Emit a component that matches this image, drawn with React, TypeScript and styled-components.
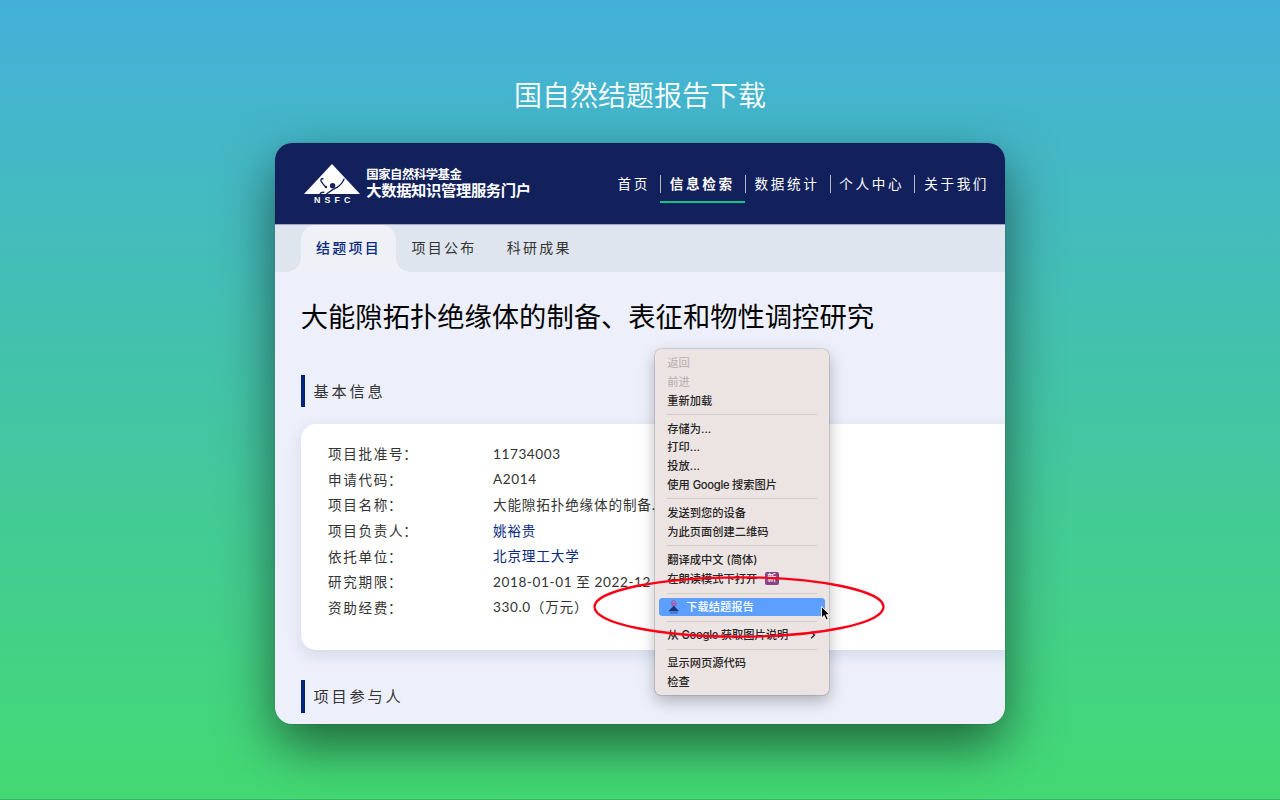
import React from 'react';
import styled, { createGlobalStyle } from 'styled-components';

const Global = createGlobalStyle`
  * { box-sizing: border-box; }
  html, body { margin: 0; padding: 0; }
  body { font-family: 'Noto Sans CJK SC', sans-serif; overflow: hidden; }
`;

const Stage = styled.div`
  width: 1280px;
  height: 800px;
  background: linear-gradient(180deg, #44b0da 0%, #43d972 100%);
  border-bottom: 1px solid #3cb36b;
  display: flex;
  flex-direction: column;
  align-items: center;
  overflow: hidden;
`;

const Title = styled.h1`
  margin: 74px 0 0;
  height: 69px;
  line-height: 40px;
  font-size: 28px;
  font-weight: 350;
  color: #fff;
`;

const Frame = styled.div`
  position: relative;
  flex: none;
  width: 730.5px;
  height: 580.5px;
  border-radius: 17px;
  box-shadow: 0 0 1px rgba(0, 0, 0, 0.45), 0 22px 54px rgba(0, 0, 0, 0.53);
`;

const Page = styled.div`
  width: 100%;
  height: 100%;
  border-radius: 17px;
  overflow: hidden;
  background: #edf0fa;
  display: flex;
  flex-direction: column;
`;

const Header = styled.header`
  height: 81.5px;
  flex: none;
  background: #12205b;
  border-bottom: 1px solid #a3a6c4;
  display: flex;
  justify-content: space-between;
  padding: 20px 6px 0 29px;
`;

const Brand = styled.div`
  display: flex;
  gap: 6.5px;
  color: #fff;
`;

const Emblem = styled.div`
  width: 56px;
  padding-top: 0.6px;
  display: flex;
  flex-direction: column;
  align-items: center;
  svg { display: block; }
`;

const EmblemName = styled.span`
  font: 700 8.8px/9px 'Liberation Sans', sans-serif;
  letter-spacing: 4.2px;
  margin: 2px -5px 0 0;
`;

const BrandText = styled.div`
  padding-top: 3px;
  white-space: nowrap;
`;

const BrandLine = styled.div<{ $big?: boolean }>`
  font-weight: 700;
  font-size: ${p => (p.$big ? 15.3 : 12.4)}px;
  letter-spacing: ${p => (p.$big ? -0.35 : -0.5)}px;
  line-height: ${p => (p.$big ? 15 : 16)}px;
`;

const Nav = styled.nav`
  display: flex;
  align-items: flex-start;
  padding-top: 1px;
`;

const NavItem = styled.a<{ $active?: boolean; $first?: boolean }>`
  width: ${p => (p.$first ? 52.3 : 84.8)}px;
  height: 39px;
  padding: 9px 0 0 9.7px;
  font-size: 13.6px;
  line-height: 20px;
  letter-spacing: 2.65px;
  white-space: nowrap;
  color: #fff;
  font-weight: ${p => (p.$active ? 700 : 400)};
  border-bottom: 2px solid ${p => (p.$active ? '#12c583' : 'transparent')};
  background: ${p =>
    p.$first ? 'none' : 'linear-gradient(#b4b8cc, #b4b8cc) 0 11px / 1px 18px no-repeat'};
`;

const Tabs = styled.div`
  height: 47px;
  flex: none;
  display: flex;
  background: #dfe5ef;
  padding-left: 26px;
`;

const Tab = styled.div<{ $active?: boolean }>`
  position: relative;
  width: 95.4px;
  padding: 11px 0 0 15.3px;
  font-size: 14px;
  line-height: 22px;
  letter-spacing: 2.25px;
  font-weight: ${p => (p.$active ? 500 : 400)};
  color: ${p => (p.$active ? '#0b2a80' : '#333')};
  background: ${p => (p.$active ? '#eff1f7' : 'none')};
  border-radius: 15px 15px 0 0;
  ${p =>
    p.$active &&
    `
    &::before, &::after {
      content: '';
      position: absolute;
      bottom: 0;
      width: 14px;
      height: 14px;
    }
    &::before { left: -14px; background: radial-gradient(circle at 0 0, transparent 13.5px, #eff1f7 14px); }
    &::after { right: -14px; background: radial-gradient(circle at 100% 0, transparent 13.5px, #eff1f7 14px); }
  `}
`;

const Content = styled.main`
  padding: 23px 0 0 26px;
`;

const Heading = styled.h2`
  margin: 0 0 40px;
  font-size: 27.3px;
  line-height: 40px;
  font-weight: 400;
  color: #000;
  white-space: nowrap;
`;

const Section = styled.h3`
  margin: 0;
  height: 32.5px;
  border-left: 4px solid #04247b;
  padding-left: 8.7px;
  font-size: 15.2px;
  line-height: 30px;
  letter-spacing: 2.8px;
  font-weight: 400;
  color: #333;
`;

const Card = styled.section`
  margin: 17px 0 30.5px;
  height: 225.5px;
  width: 760px;
  border-radius: 15px;
  background: #fff;
  box-shadow: 0 5px 16px rgba(60, 80, 140, 0.15);
  padding: 17.3px 0 0 27.2px;
`;

const Row = styled.div`
  display: grid;
  grid-template-columns: 165px 1fr;
  height: 25.6px;
  line-height: 25.6px;
  font-size: 13.6px;
  color: #333;
  white-space: nowrap;
`;

const Label = styled.span`
  letter-spacing: 1.7px;
`;

const Colon = styled.span`
  margin-left: -1.2px;
`;

const Value = styled.span<{ $link?: boolean }>`
  padding-top: 0.5px;
  font-family: Lato, 'Noto Sans CJK SC', sans-serif;
  letter-spacing: 0.85px;
  color: ${p => (p.$link ? '#0b2a80' : '#333')};
`;

const Digits = styled.span`
  letter-spacing: 0.6px;
`;

const Menu = styled.div`
  position: absolute;
  left: 380.7px;
  top: 205.6px;
  width: 173.3px;
  height: 346.8px;
  padding: 5px 4px;
  border-radius: 6px;
  background: #ece4e3;
  box-shadow: 0 0 0 0.6px rgba(0, 0, 0, 0.2), 0 6px 16px rgba(0, 0, 0, 0.28);
  font-family: Inter, 'Noto Sans CJK SC', sans-serif;
`;

const MenuItem = styled.div<{ $muted?: boolean; $hot?: boolean; $tall?: boolean }>`
  height: ${p => (p.$tall ? 19.3 : 18.75)}px;
  display: flex;
  align-items: center;
  gap: ${p => (p.$hot ? 6 : 7.5)}px;
  padding: 0.2px 9px 0 7.8px;
  border-radius: 3.5px;
  font-size: 11.25px;
  line-height: 18px;
  white-space: pre;
  color: ${p => (p.$hot ? '#fff' : p.$muted ? '#b3adad' : '#262424')};
  font-weight: ${p => (p.$muted ? 400 : 500)};
  background: ${p => (p.$hot ? '#5c9fff' : 'none')};
`;

const Latin = styled.span`
  letter-spacing: -0.32px;
`;

const Divider = styled.hr`
  height: 1px;
  border: 0;
  margin: 4.2px 8px 4.15px;
  background: #d2cccb;
`;

const Badge = styled.span`
  width: 14px;
  height: 13px;
  border-radius: 2px;
  background: #854284;
  color: #fff;
  font-size: 9px;
  font-weight: 500;
  line-height: 12.5px;
  text-align: center;
`;

const Chevron = styled.svg`
  margin-left: auto;
`;

const Ring = styled.svg`
  position: absolute;
  left: 317px;
  top: 431px;
`;

const Cursor = styled.svg`
  position: absolute;
  left: 545px;
  top: 462px;
`;

const rows = [
  { label: '项目批准号', value: <Digits>11734003</Digits> },
  { label: '申请代码', value: <Digits>A2014</Digits> },
  { label: '项目名称', value: '大能隙拓扑绝缘体的制备.' },
  { label: '项目负责人', value: '姚裕贵', link: true },
  { label: '依托单位', value: '北京理工大学', link: true },
  { label: '研究期限', value: <Digits>2018-01-01 至 2022-12</Digits> },
  { label: '资助经费', value: <><Digits>330.0</Digits>（万元）</> },
];

const EmblemIcon = () => (
  <svg width="56" height="30" viewBox="0 0 56 30">
    <path d="M28 0 56 30H0Z" fill="#fff" />
    <circle cx="28.6" cy="21.8" r="2.7" fill="#12205b" />
    <path d="M19.4 14.8H17.6Q16.6 15.6 17 17Q18.4 19.6 21.8 23.2M40.2 14.6Q38.6 19.4 33.4 23.2Q28 25.6 22.4 30M15.8 30Q17.4 27.8 20.4 28.4" fill="none" stroke="#12205b" strokeWidth="1.4" />
    <circle cx="22" cy="23" r="1.2" fill="#12205b" />
  </svg>
);

export default function App() {
  return (
    <>
      <Global />
      <Stage>
        <Title>国自然结题报告下载</Title>
        <Frame>
          <Page>
            <Header>
              <Brand>
                <Emblem>
                  <EmblemIcon />
                  <EmblemName>NSFC</EmblemName>
                </Emblem>
                <BrandText>
                  <BrandLine>国家自然科学基金</BrandLine>
                  <BrandLine $big>大数据知识管理服务门户</BrandLine>
                </BrandText>
              </Brand>
              <Nav>
                <NavItem $first>首页</NavItem>
                <NavItem $active>信息检索</NavItem>
                <NavItem>数据统计</NavItem>
                <NavItem>个人中心</NavItem>
                <NavItem>关于我们</NavItem>
              </Nav>
            </Header>
            <Tabs>
              <Tab $active>结题项目</Tab>
              <Tab>项目公布</Tab>
              <Tab>科研成果</Tab>
            </Tabs>
            <Content>
              <Heading>大能隙拓扑绝缘体的制备、表征和物性调控研究</Heading>
              <Section>基本信息</Section>
              <Card>
                {rows.map(r => (
                  <Row key={r.label}>
                    <Label>{r.label}<Colon>：</Colon></Label>
                    <Value $link={r.link}>{r.value}</Value>
                  </Row>
                ))}
              </Card>
              <Section>项目参与人</Section>
            </Content>
          </Page>
          <Menu>
            <MenuItem $muted>返回</MenuItem>
            <MenuItem $muted>前进</MenuItem>
            <MenuItem>重新加载</MenuItem>
            <Divider />
            <MenuItem>存储为...</MenuItem>
            <MenuItem>打印...</MenuItem>
            <MenuItem>投放...</MenuItem>
            <MenuItem><span>使用 <Latin>Google </Latin>搜索图片</span></MenuItem>
            <Divider />
            <MenuItem>发送到您的设备</MenuItem>
            <MenuItem>为此页面创建二维码</MenuItem>
            <Divider />
            <MenuItem>翻译成中文 (简体)</MenuItem>
            <MenuItem $tall>在朗读模式下打开<Badge>新</Badge></MenuItem>
            <Divider />
            <MenuItem $hot>
              <svg width="13" height="14" viewBox="0 0 13 14">
                <path d="M4.9 0.9h2.7l1.3 1.2v3.2h-4zM5.2 3.4h3.4" fill="none" stroke="#d0417f" strokeWidth="0.9" />
                <path d="M6.8 5.4 12 11.2H1.4Z" fill="#1c3477" />
                <path d="M3.4 12.9h7" stroke="#1c3477" strokeWidth="0.9" strokeDasharray="1.4 0.5" />
              </svg>
              下载结题报告
            </MenuItem>
            <Divider />
            <MenuItem>
              <span>从 <Latin>Google </Latin>获取图片说明</span>
              <Chevron width="6" height="8" viewBox="0 0 6 8">
                <path d="M1.2 0.8 4.5 4 1.2 7.2" fill="none" stroke="#262424" strokeWidth="1.4" />
              </Chevron>
            </MenuItem>
            <Divider />
            <MenuItem>显示网页源代码</MenuItem>
            <MenuItem>检查</MenuItem>
          </Menu>
          <Ring width="294" height="66" viewBox="0 0 294 66">
            <ellipse cx="147" cy="33" rx="144.5" ry="29.7" fill="none" stroke="#fb0016" strokeWidth="2.3" />
          </Ring>
          <Cursor width="12" height="18" viewBox="0 0 12 18">
            <path d="M1.5 1.5V13L4.2 10.5 6.2 15 8.2 14.1 6.3 9.7H9.8Z" fill="#000" stroke="#fff" strokeWidth="0.9" />
          </Cursor>
        </Frame>
      </Stage>
    </>
  );
}
